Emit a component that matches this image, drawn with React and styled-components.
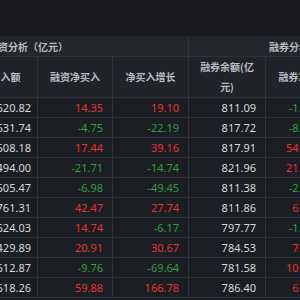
import styled, { createGlobalStyle } from 'styled-components';

const GlobalStyle = createGlobalStyle`
  html, body {
    margin: 0;
    padding: 0;
    background: #1b1e22;
  }
`;

const Page = styled.div`
  width: 300px;
  height: 300px;
  overflow: hidden;
  background: #1b1e22;
  font-family: 'Noto Sans', 'Noto Sans CJK SC', sans-serif;
`;

const TopBar = styled.div`
  height: 36px;
  background: #181a1e;
`;

const Table = styled.table`
  border-collapse: collapse;
  table-layout: fixed;
  width: 464px;
  margin-left: -47px;
`;

const GroupCell = styled.th`
  height: 20px;
  padding: 0 0 0 ${(p) => p.$indent || 0}px;
  background: #23262a;
  border: 1px solid #303338;
  border-top: none;
  color: #b7bcc3;
  font-size: 10px;
  font-weight: 600;
  font-family: 'Noto Sans CJK SC', sans-serif;
  text-align: left;
  white-space: nowrap;
`;

const HeadCell = styled.th`
  height: 39px;
  padding: 0 8px;
  background: #202327;
  border: 1px solid #303338;
  color: #b7bcc3;
  font-size: 10px;
  font-weight: 600;
  line-height: 20px;
  font-family: 'Noto Sans CJK SC', sans-serif;
  text-align: center;
`;

const toneColor = {
  up: '#e5332f',
  down: '#2f9e3f',
  flat: '#d6d9dd',
};

const Cell = styled.td`
  height: 19px;
  padding: 0 ${(p) => p.$inset || 9}px 0 0;
  border: 1px solid #303338;
  color: ${(p) => toneColor[p.$tone || 'flat']};
  font-size: 11px;
  text-align: right;
  white-space: nowrap;
`;

const widths = [84, 75, 76, 77, 76, 76];

const insets = [6, 9, 9, 9, 27];

const rows = [
  ['620.82', '14.35', '19.10', '811.09', '-1.45'],
  ['631.74', '-4.75', '-22.19', '817.72', '-8.31'],
  ['608.18', '17.44', '39.16', '817.91', '54.62'],
  ['494.00', '-21.71', '-14.74', '821.96', '21.08'],
  ['605.47', '-6.98', '-49.45', '811.38', '-2.37'],
  ['761.31', '42.47', '27.74', '811.86', '6.45'],
  ['624.03', '14.74', '-6.17', '797.77', '-1.92'],
  ['429.89', '20.91', '30.67', '784.53', '7.36'],
  ['612.87', '-9.76', '-69.64', '781.58', '10.24'],
  ['618.26', '59.88', '166.78', '786.40', '6.18'],
];

const tone = (v, col) => {
  if (col === 0 || col === 3) return 'flat';
  return v.startsWith('-') ? 'down' : 'up';
};

export default function App() {
  return (
    <Page>
      <GlobalStyle />
      <TopBar />
      <Table>
        <colgroup>
          {widths.map((w, i) => (
            <col key={i} style={{ width: w }} />
          ))}
        </colgroup>
        <thead>
          <tr>
            <GroupCell colSpan={3} $indent={34}>融资分析（亿元）</GroupCell>
            <GroupCell colSpan={3} $indent={80}>融券分析（亿元）</GroupCell>
          </tr>
          <tr>
            <HeadCell>融资买入额</HeadCell>
            <HeadCell>融资净买入</HeadCell>
            <HeadCell>净买入增长</HeadCell>
            <HeadCell>融券余额(亿元)</HeadCell>
            <HeadCell>融券净卖出</HeadCell>
            <HeadCell>融券净增长</HeadCell>
          </tr>
        </thead>
        <tbody>
          {rows.map((r, i) => (
            <tr key={i}>
              {r.map((v, j) => (
                <Cell key={j} $tone={tone(v, j)} $inset={insets[j]}>
                  {v}
                </Cell>
              ))}
              <Cell />
            </tr>
          ))}
        </tbody>
      </Table>
    </Page>
  );
}
